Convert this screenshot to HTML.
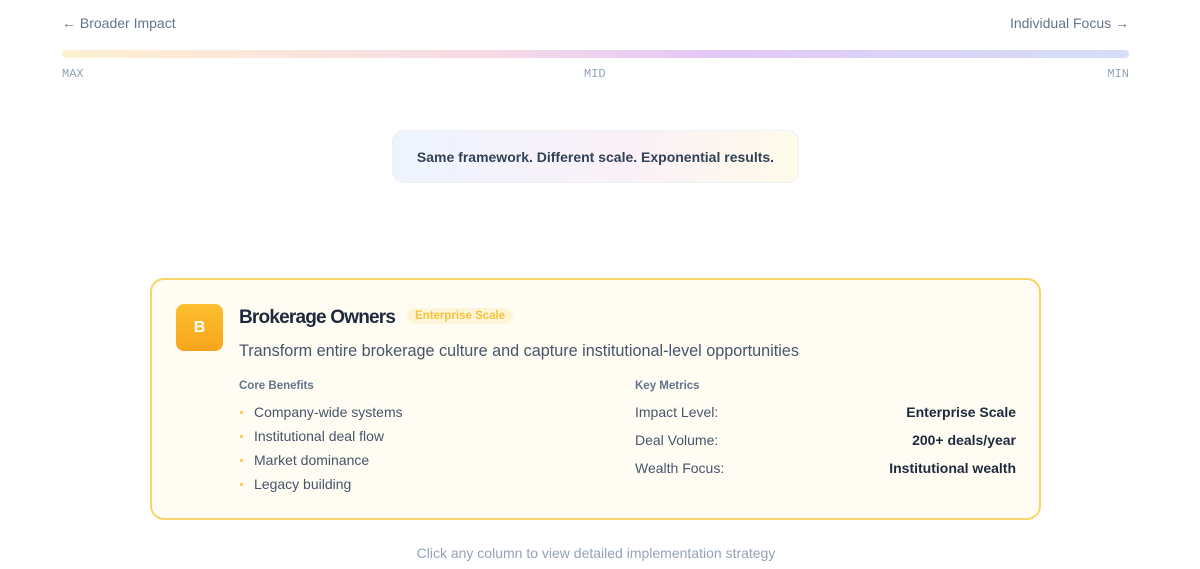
<!DOCTYPE html>
<html><head><meta charset="utf-8"><style>
*{margin:0;padding:0;box-sizing:border-box}
body{width:1200px;height:569px;background:#fff;font-family:"Liberation Sans",sans-serif;position:relative;overflow:hidden;color:#1e293b}
.a{position:absolute}
.mono{font-family:"Liberation Mono",monospace;font-size:12px;color:#94a3b8}
.li{height:24px;line-height:24px;white-space:nowrap}
.dot{display:inline-block;width:3px;height:3px;border-radius:50%;background:#f8c24a;vertical-align:middle;margin:0 11px 2px 1px}
</style></head><body>
<div class="a" style="left:62px;top:15px;font-size:14px;color:#64748b">← Broader Impact</div>
<div class="a" style="right:71px;top:15px;font-size:14px;color:#64748b">Individual Focus →</div>
<div class="a" style="left:62px;top:50px;width:1067px;height:8px;border-radius:4px;background:linear-gradient(90deg,#fdf0d0,#f5dbe6 40%,#e4c8f7 60%,#d8d6f8 85%,#d5ddf9)"></div>
<div class="a mono" style="left:62px;top:67px">MAX</div>
<div class="a mono" style="left:584px;top:67px">MID</div>
<div class="a mono" style="right:71px;top:67px">MIN</div>
<div class="a" style="left:392px;top:130px;width:407px;height:53px;border-radius:12px;border:1px solid #eef0f4;background:linear-gradient(90deg,#eef4fe,#fbf1f8 60%,#fefbea);display:flex;align-items:center;justify-content:center;font-size:14px;font-weight:bold;color:#334155">Same framework. Different scale. Exponential results.</div>
<div class="a" style="left:150px;top:278px;width:891px;height:242px;border:2px solid #f8d569;border-radius:14px;background:#fffcf4"></div>
<div class="a" style="left:176px;top:304px;width:47px;height:47px;border-radius:8px;background:linear-gradient(180deg,#fcbf2f,#f8a51c);color:#fff;font-weight:bold;font-size:16px;display:flex;align-items:center;justify-content:center">B</div>
<div class="a" style="left:239px;top:307px;font-size:19px;font-weight:bold;color:#1e293b;letter-spacing:-0.8px">Brokerage Owners</div>
<div class="a" style="left:407px;top:308px;padding:2px 8px;border-radius:10px;background:#fef5d8;color:#f6c23a;font-size:11.5px;font-weight:bold">Enterprise Scale</div>
<div class="a" style="left:239px;top:342px;font-size:16.2px;color:#475569">Transform entire brokerage culture and capture institutional-level opportunities</div>
<div class="a" style="left:239px;top:380px;font-size:11.5px;font-weight:bold;color:#64748b">Core Benefits</div>
<div class="a" style="left:239px;top:400px;font-size:14px;color:#475569">
<div class="li"><span class="dot"></span>Company-wide systems</div>
<div class="li"><span class="dot"></span>Institutional deal flow</div>
<div class="li"><span class="dot"></span>Market dominance</div>
<div class="li"><span class="dot"></span>Legacy building</div>
</div>
<div class="a" style="left:635px;top:380px;font-size:11.5px;font-weight:bold;color:#64748b">Key Metrics</div>
<div class="a" style="left:635px;top:398px;width:381px;font-size:14px;line-height:28px">
<div style="display:flex;justify-content:space-between"><span style="color:#475569">Impact Level:</span><b style="color:#1e293b">Enterprise Scale</b></div>
<div style="display:flex;justify-content:space-between"><span style="color:#475569">Deal Volume:</span><b style="color:#1e293b">200+ deals/year</b></div>
<div style="display:flex;justify-content:space-between"><span style="color:#475569">Wealth Focus:</span><b style="color:#1e293b">Institutional wealth</b></div>
</div>
<div class="a" style="left:0;width:1192px;top:545px;text-align:center;font-size:14px;color:#94a3b8">Click any column to view detailed implementation strategy</div>
</body></html>
